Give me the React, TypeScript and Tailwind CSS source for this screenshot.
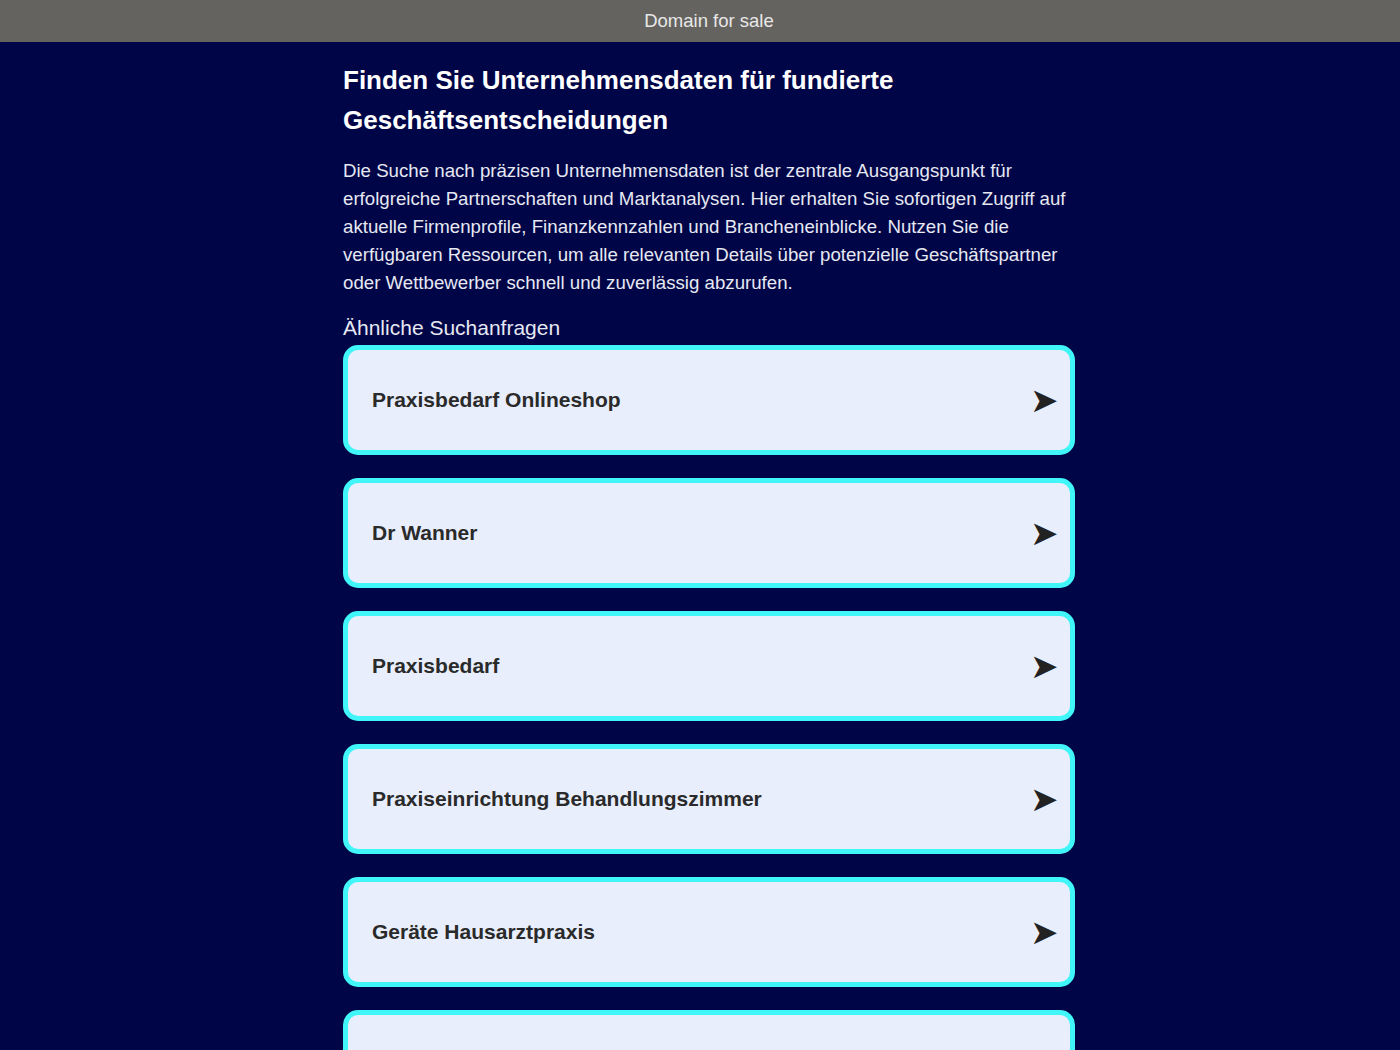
import React from "react";

const items = [
  "Praxisbedarf Onlineshop",
  "Dr Wanner",
  "Praxisbedarf",
  "Praxiseinrichtung Behandlungszimmer",
  "Geräte Hausarztpraxis",
  "Praxisbedarf Arzt",
];

export default function App() {
  return (
    <div className="min-h-[1050px] bg-[#000547] font-['Liberation_Sans',Arial,sans-serif]">
      <div className="h-[42px] bg-[#65635f] flex items-center justify-center pl-[18px]">
        <span className="text-[18.5px] text-[#e8e8e8]">Domain for sale</span>
      </div>
      <div className="flex justify-center pl-[18px]">
        <div className="w-[732px] pt-[18px]">
          <h1 className="text-[26px] font-bold leading-[40px] text-white">
            Finden Sie Unternehmensdaten für fundierte Geschäftsentscheidungen
          </h1>
          <p className="mt-[17px] text-[18.67px] leading-[28px] text-[#e6e8f2]">
            Die Suche nach präzisen Unternehmensdaten ist der zentrale Ausgangspunkt für erfolgreiche Partnerschaften und Marktanalysen. Hier erhalten Sie sofortigen Zugriff auf aktuelle Firmenprofile, Finanzkennzahlen und Brancheneinblicke. Nutzen Sie die verfügbaren Ressourcen, um alle relevanten Details über potenzielle Geschäftspartner oder Wettbewerber schnell und zuverlässig abzurufen.
          </p>
          <h2 className="mt-[17px] text-[21px] leading-[28px] text-[#e6e8f2]">Ähnliche Suchanfragen</h2>
          <div className="mt-[3px] flex flex-col gap-[23px]">
            {items.map((t) => (
              <a
                key={t}
                href="#"
                className="flex h-[110px] items-center justify-between rounded-[15px] border-[5px] border-[#40f6f8] bg-[#e8eefc] pl-[24px] pr-[12px]"
              >
                <span className="text-[21px] font-bold text-[#2a2a2a]">{t}</span>
                <span className="text-[34px] text-[#222] leading-none">➤</span>
              </a>
            ))}
          </div>
        </div>
      </div>
    </div>
  );
}
